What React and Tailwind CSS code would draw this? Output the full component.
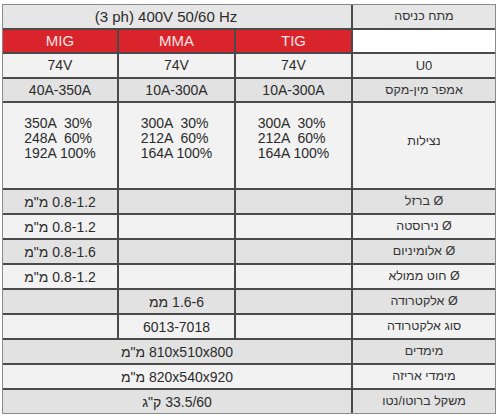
const light = 'bg-[#f2f2f2]';
const dark = 'bg-[#e2e2e2]';

// value rows below the duty-cycle row: [label, cells, shade]
// cells: array of { text, span }
const lowerRows = [
  { label: 'Ø ברזל', cells: [{ text: '0.8-1.2 מ"מ' }, {}, {}], bg: dark },
  { label: 'Ø נירוסטה', cells: [{ text: '0.8-1.2 מ"מ' }, {}, {}], bg: light },
  { label: 'Ø אלומיניום', cells: [{ text: '0.8-1.6 מ"מ' }, {}, {}], bg: dark },
  { label: 'Ø חוט ממולא', cells: [{ text: '0.8-1.2 מ"מ' }, {}, {}], bg: light },
  { label: 'Ø אלקטרודה', cells: [{}, { text: '1.6-6 ממ' }, {}], bg: dark },
  { label: 'סוג אלקטרודה', cells: [{}, { text: '6013-7018' }, {}], bg: light },
  { label: 'מימדים', cells: [{ text: '810x510x800 מ"מ', span: 3 }], bg: dark },
  { label: 'מימדי אריזה', cells: [{ text: '820x540x920 מ"מ', span: 3 }], bg: light },
  { label: 'משקל ברוטו/נטו', cells: [{ text: '33.5/60 ק"ג', span: 3 }], bg: dark },
];

const duty = [
  ['350A  30%', '248A  60%', '192A 100%'],
  ['300A  30%', '212A  60%', '164A 100%'],
  ['300A  30%', '212A  60%', '164A 100%'],
];

const Cell = ({ children, className = '', dir = 'ltr' }) => (
  <div dir={dir} className={`flex items-center justify-center text-[14px] text-[#2b2b2b] leading-none ${className}`}>
    {children}
  </div>
);

const Label = ({ children, className = '' }) => (
  <div dir="rtl" className={`flex items-center justify-center text-[12.5px] text-[#333] leading-none ${className}`}>
    {children}
  </div>
);

export default function App() {
  return (
    <div className="w-[500px] h-[417px] bg-white pt-[4px] pl-[2px]" style={{ fontFamily: '"Liberation Sans", Arial, sans-serif' }}>
      <div className="w-[494px] border border-[#8a8a8a] bg-[#4a4a4a] grid grid-cols-[114px_115px_115px_142px] grid-rows-[22.5px_22.5px_22.5px_22.5px_85px_repeat(9,23px)] gap-[2px]">
        {/* input voltage */}
        <Cell className="col-span-3 bg-[#e6e6e6] !text-[15px] pr-[22px]">(3 ph) 400V 50/60 Hz</Cell>
        <Label className="bg-[#e6e6e6]">מתח כניסה</Label>

        {/* process header */}
        {['MIG', 'MMA', 'TIG'].map((p) => (
          <Cell key={p} className="bg-[#d8242a] !text-[15px] !text-[#fbe3e3]">{p}</Cell>
        ))}
        <div className="bg-white" />

        {/* open-circuit voltage */}
        {[0, 1, 2].map((i) => (
          <Cell key={i} className={light}>74V</Cell>
        ))}
        <Label className={`${light} !text-[13px]`}>U0</Label>

        {/* current range */}
        <Cell className={dark}>40A-350A</Cell>
        <Cell className={dark}>10A-300A</Cell>
        <Cell className={dark}>10A-300A</Cell>
        <Label className={dark}>אמפר מין-מקס</Label>

        {/* duty cycle */}
        {duty.map((lines, i) => (
          <div key={i} className={`${light} flex flex-col items-center pt-[13px] text-[14px] text-[#2b2b2b] leading-[15px]`}>
            <div className="whitespace-pre">
              {lines.map((l) => (
                <div key={l}>{l}</div>
              ))}
            </div>
          </div>
        ))}
        <Label className={`${light} pb-[8px]`}>נצילות</Label>

        {lowerRows.map((row) => (
          <RowCells key={row.label} row={row} />
        ))}
      </div>
    </div>
  );
}

const RowCells = ({ row }) => (
  <>
    {row.cells.map((c, i) => (
      <Cell key={i} dir="rtl" className={`${row.bg} ${c.span === 3 ? 'col-span-3' : ''}`}>
        {c.text}
      </Cell>
    ))}
    <Label className={row.bg}>{row.label}</Label>
  </>
);
